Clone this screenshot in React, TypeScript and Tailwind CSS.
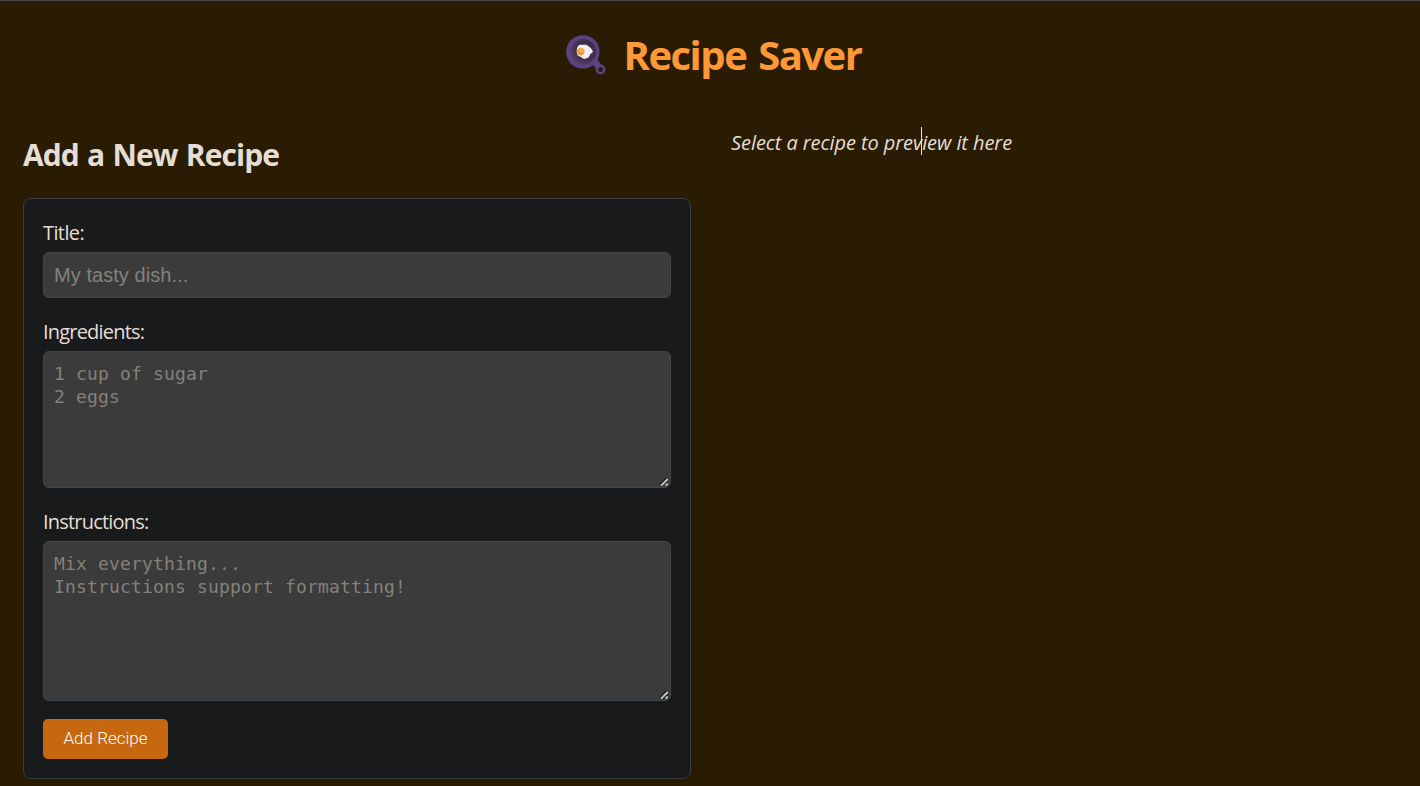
import React from "react";

function PanIcon() {
  return (
    <svg className="mt-[2px] h-[42px] w-[42px] shrink-0" viewBox="0 0 42 42" aria-hidden="true">
      <defs>
        <radialGradient id="pan" cx="0.62" cy="0.4" r="0.7">
          <stop offset="0" stopColor="#3b2845" />
          <stop offset="0.6" stopColor="#42304f" />
          <stop offset="1" stopColor="#5d4874" />
        </radialGradient>
        <radialGradient id="yolk" cx="0.6" cy="0.3" r="0.75">
          <stop offset="0" stopColor="#ffb944" />
          <stop offset="1" stopColor="#e58a22" />
        </radialGradient>
      </defs>
      <path d="M26 29l5-4.500 5 6-5 4z" fill="#5b4284" />
      <circle cx="34.500" cy="34.500" r="3.700" fill="none" stroke="#5b4284" strokeWidth="2.600" />
      <circle cx="16.800" cy="16.900" r="16.700" fill="#5b4284" />
      <circle cx="17.300" cy="16.900" r="13" fill="url(#pan)" />
      <path d="M13.500 9.800h6.500c1.500 0 2 1.600 3.500 2.200 1.500.6 2.200 2.500 3.500 4.500-.5 1.800-2.500 2-3.200 3.500-.3 2-1.500 3-3 3-1.500 1.200-4 1.200-5-.2-.6-1.200-2.600-1-4-2.300-1.300-1.500-1.300-5-.8-7 .4-1.700 1.200-3 2.500-3.700z" fill="#f4edf8" />
      <circle cx="14.800" cy="16.500" r="3.700" fill="url(#yolk)" />
    </svg>
  );
}

function ResizeGrip() {
  return (
    <svg className="pointer-events-none absolute right-[2px] bottom-[1px] h-[10px] w-[10px]" viewBox="0 0 10 10" aria-hidden="true">
      <path d="M1 7.500L7.500 1M5.500 8L8.500 5" stroke="#181a1b" strokeWidth="1.600" />
      <path d="M2 8.700L8.700 2M6.500 8.700L8.700 6.500" stroke="#c9c7c3" strokeWidth="1.800" />
    </svg>
  );
}

function AreaField({ label, placeholder, height }: { label: string; placeholder: string; height: string }) {
  return (
    <label className="block">
      <span className="block h-[33px] text-[20px] leading-[28px] tracking-[-0.8px]">{label}</span>
      <span className="relative block">
        <textarea
          placeholder={placeholder}
          className={`block w-full resize-none overflow-hidden rounded-[6px] border border-[#3f474a] bg-[#3b3b3b] px-[10px] py-[10px] font-['DejaVu_Sans_Mono',monospace] text-[18px] leading-[23px] tracking-[0.163px] outline-none placeholder:text-[#84817b] ${height}`}
        />
        <ResizeGrip />
      </span>
    </label>
  );
}

export default function App() {
  return (
    <div className="h-[786px] overflow-hidden border-t border-[#46424e] bg-[#2a1c02] font-['Open_Sans','Noto_Sans',sans-serif] text-[#e4ded5]">
      <header className="flex h-[108px] items-center justify-center pl-[10px]">
        <div className="flex items-center gap-[16px]">
          <PanIcon />
          <h1 className="w-[241px] text-[40px] leading-[54px] font-bold tracking-[-1.5px] whitespace-nowrap text-[#ff9937] [word-spacing:3px]">Recipe Saver</h1>
        </div>
      </header>
      <main className="flex gap-[40px] px-[23px]">
        <section className="w-[668px] shrink-0 pt-[25px]">
          <h2 className="h-[64px] text-[30px] leading-[41px] font-bold tracking-[-0.96px] whitespace-nowrap [word-spacing:1.5px]">Add a New Recipe</h2>
          <form className="flex h-[581px] flex-col rounded-[8px] border border-[#373d40] bg-[#181a1b] px-[19px] pt-[20px]" onSubmit={(e) => e.preventDefault()}>
            <label className="mb-[20px] block">
              <span className="block h-[33px] text-[20px] leading-[28px] tracking-[-0.6px]">Title:</span>
              <input
                placeholder="My tasty dish..."
                className="block h-[46px] w-full rounded-[6px] border border-[#3f474a] bg-[#3b3b3b] px-[10px] font-['Liberation_Sans',sans-serif] text-[20px] tracking-[0.06px] outline-none placeholder:text-[#84817b]"
              />
            </label>
            <div className="mb-[20px]">
              <AreaField label="Ingredients:" placeholder={"1 cup of sugar\n2 eggs"} height="h-[137px]" />
            </div>
            <AreaField label="Instructions:" placeholder={"Mix everything...\nInstructions support formatting!"} height="h-[160px]" />
            <button type="submit" className="mt-[18px] h-[40px] w-[125px] rounded-[5px] bg-[#c76710] font-['Roboto',sans-serif] text-[17px] font-light text-white">Add Recipe</button>
          </form>
        </section>
        <section className="pt-[20px]">
          <p className="relative text-[20px] leading-[28px] tracking-[-0.07px] whitespace-nowrap italic">
            Select a recipe to preview it here
            <span className="absolute top-[-2px] left-[190px] h-[28px] w-px bg-[#e4ded5]" />
          </p>
        </section>
      </main>
    </div>
  );
}
